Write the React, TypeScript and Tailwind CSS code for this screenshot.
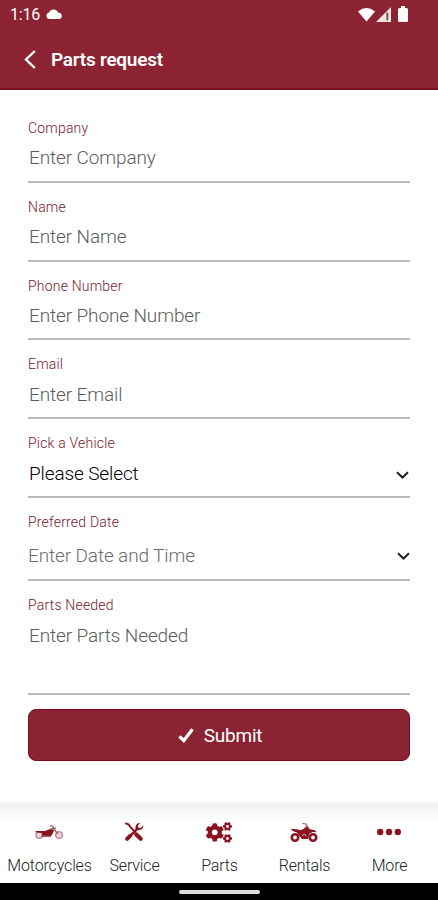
import type { ReactNode } from 'react';
import { FaCogs } from 'react-icons/fa';

type Field = {
  label: string;
  text: string;
  labelClass: string;
  rowClass: string;
  textClass: string;
  chevron?: string;
};

const fields: Field[] = [
  { label: 'Company', text: 'Enter Company', labelClass: 'h-[17px] pt-px', rowClass: 'h-[47px] pt-[10px] mb-4', textClass: 'pl-px text-[#5c5c5c]' },
  { label: 'Name', text: 'Enter Name', labelClass: 'h-4', rowClass: 'h-[47px] pt-[10px] mb-4', textClass: 'pl-px text-[#5c5c5c]' },
  { label: 'Phone Number', text: 'Enter Phone Number', labelClass: 'h-4', rowClass: 'h-[46px] pt-[10px] mb-4', textClass: 'pl-px text-[#5c5c5c]' },
  { label: 'Email', text: 'Enter Email', labelClass: 'h-[17px]', rowClass: 'h-[46px] pt-[10px] mb-4', textClass: 'pl-px text-[#5c5c5c]' },
  { label: 'Pick a Vehicle', text: 'Please Select', labelClass: 'h-4', rowClass: 'h-[47px] pt-[11px] mb-4', textClass: 'pl-px text-black', chevron: 'mr-px mt-[9px]' },
  { label: 'Preferred Date', text: 'Enter Date and Time', labelClass: 'h-4', rowClass: 'h-[51px] pt-[14px] mb-4', textClass: 'text-[#6c6c6c]', chevron: 'mt-[8px]' },
  { label: 'Parts Needed', text: 'Enter Parts Needed', labelClass: 'h-4', rowClass: 'h-[82px] pt-[11px] mb-[14px]', textClass: 'pl-px text-[#5c5c5c]' },
];

function Chevron({ className }: { className: string }) {
  return (
    <svg className={`h-[8px] w-[13px] ${className}`} viewBox="0 0 13 8" fill="none" stroke="#222" strokeWidth="2">
      <path d="M1 1.2 6.5 6.5 12 1.2" />
    </svg>
  );
}

function MotorcycleIcon() {
  return (
    <svg className="h-[18px] w-[30px]" viewBox="0 0 30 18" fill="none">
      <circle cx="5.3" cy="12" r="3.2" fill="#eadadd" stroke="#c58f96" strokeWidth="1.6" />
      <circle cx="25" cy="12" r="3.3" fill="#eadadd" stroke="#c58f96" strokeWidth="1.6" />
      <path d="M1.5 8h9l3-1 3.5-1 3 .8-.7 2.7-2.3 3.7H8L8 10.2 1.5 9.2z" fill="#8b1220" />
      <path d="M16 3h2.5l2 3.5 3.5 4.5M15 6.5l7-1.5" stroke="#8b4650" strokeWidth="1.2" />
      <path d="M7 13.3h10" stroke="#a65a63" strokeWidth="1.5" />
    </svg>
  );
}

function ServiceIcon() {
  return (
    <svg className="h-[20px] w-[20px]" viewBox="0 0 20 20" fill="none">
      <path d="m1.2 1.1 3.6 1.5 1.4 2.2 5.4 5.5" stroke="#8b1220" strokeWidth="1.9" />
      <path d="m12.3 12.4 4.4 4.3" stroke="#8b1220" strokeWidth="4.2" strokeLinecap="round" />
      <path d="m4.5 15.6 8.7-8.8" stroke="#8b1220" strokeWidth="2.6" />
      <path d="m3.1 16.9 3-3" stroke="#8b1220" strokeWidth="4" strokeLinecap="round" />
      <path d="M16.2 1a4.2 4.2 0 0 0-4.6 5.3 4.2 4.2 0 0 0 7.6-2.8l-2.6 2.6-2.2-.4-.5-2.1z" fill="#8b1220" />
    </svg>
  );
}

function QuadIcon() {
  return (
    <svg className="h-[21px] w-[28px]" viewBox="0 0 28 21" fill="none">
      <circle cx="5" cy="15.5" r="3.2" stroke="#8b1220" strokeWidth="2.6" />
      <circle cx="23" cy="15.5" r="3.2" stroke="#8b1220" strokeWidth="2.6" />
      <path d="M.8 6.8 7 7.2l3.7 1 3.5-1.7 2.2-2.2 3.7 3 4.7 1 1.7 2-3.8-.3-3.1 1.5-1.7 5.5h-6L9 13.5 7 10.4 2.7 9z" fill="#8b1220" />
      <path d="M12.5 1.5 16 2l2.8 4.5" stroke="#9d5860" strokeWidth="1.2" />
      <path d="m12.2 14 2-2 2.2 2" stroke="#fff" strokeWidth=".8" />
    </svg>
  );
}

function MoreIcon() {
  return (
    <svg className="h-[8px] w-[26px]" viewBox="0 0 26 8" fill="#8b1220">
      <circle cx="4.2" cy="4" r="3.2" />
      <circle cx="13" cy="4" r="3.2" />
      <circle cx="21.8" cy="4" r="3.2" />
    </svg>
  );
}

const tabs: { label: string; icon: ReactNode }[] = [
  { label: 'Motorcycles', icon: <MotorcycleIcon /> },
  { label: 'Service', icon: <ServiceIcon /> },
  { label: 'Parts', icon: <FaCogs className="h-[25px] w-[26px] text-[#8b1220]" /> },
  { label: 'Rentals', icon: <QuadIcon /> },
  { label: 'More', icon: <MoreIcon /> },
];

export default function App() {
  return (
    <div className="flex h-[900px] w-[438px] flex-col overflow-hidden bg-white font-['Roboto',sans-serif]">
      <header className="h-[90px] shrink-0 border-b-2 border-[#7f0d22] bg-[#8b2332] text-white">
        {/* Status bar */}
        <div className="flex h-[28px] items-center pl-[10px] pr-[29px]">
          <span className="pt-px text-[16px] leading-5 tracking-[-0.2px]">1:16</span>
          <svg className="ml-[6px] h-[10px] w-[16px]" viewBox="0 0 16 10" fill="currentColor">
            <path d="M3.5 10A3.3 3.3 0 0 1 3 3.5 5 5 0 0 1 12.3 3.8 3.1 3.1 0 0 1 13 10z" />
          </svg>
          <div className="ml-auto flex items-center">
            <svg className="h-[15px] w-[17px]" viewBox="0 0 18 15" fill="currentColor">
              <path d="M0 4.2Q9-3.2 18 4.2L9 15z" />
            </svg>
            <svg className="ml-px h-[15px] w-[15px]" viewBox="0 0 15 15">
              <path d="M15 0v15H0z" fill="#f3e4e6" />
              <path d="M10.3 5.5h2v7.8h-2z" fill="#8b4a56" />
            </svg>
            <svg className="ml-[7px] mr-px h-[16px] w-[10px]" viewBox="0 0 10 16" fill="currentColor">
              <path d="M3 0h4v2h1.5Q10 2 10 3.5v11q0 1.5-1.5 1.5h-7Q0 16 0 14.5v-11Q0 2 1.5 2H3z" />
            </svg>
          </div>
        </div>
        <div className="flex h-[62px] items-center pl-6">
          <svg className="h-[19px] w-[12px]" viewBox="0 0 12 19" fill="none" stroke="currentColor" strokeWidth="2.4">
            <path d="M10.8 1 2 9.5 10.8 18" />
          </svg>
          <h1 className="ml-[15px] pt-px text-[19px] font-semibold leading-6 tracking-[-0.25px]">Parts request</h1>
        </div>
      </header>

      <main className="flex-1 px-7 pt-[29px]">
        {fields.map((field) => (
          <div key={field.label}>
            <div className={`text-[14px] font-light leading-4 tracking-[0.2px] text-[#7d1529] ${field.labelClass}`}>{field.label}</div>
            <div className={`flex items-start justify-between border-b-2 border-[#bababa] ${field.rowClass}`}>
              <span className={`text-[19px] font-light leading-6 tracking-[-0.12px] ${field.textClass}`}>{field.text}</span>
              {field.chevron && <Chevron className={field.chevron} />}
            </div>
          </div>
        ))}

        <button className="flex h-[52px] w-full items-center justify-center rounded-[8px] border border-[#80091b] bg-[#8b2332] pl-[2px] text-white">
          <svg className="h-[15px] w-[16px]" viewBox="0 0 16 15" fill="none" stroke="currentColor" strokeWidth="3.2">
            <path d="m1.4 8.3 4.4 4.2L14.5 1.3" />
          </svg>
          <span className="ml-[10px] pt-px text-[19px] leading-6 tracking-[-0.2px]">Submit</span>
        </button>
      </main>

      {/* Bottom tabs */}
      <nav className="flex h-[80px] shrink-0 bg-[linear-gradient(#f3eeee,#fff_18px)]">
        {tabs.map((tab) => (
          <div key={tab.label} className="flex w-[85px] shrink-0 flex-col items-center first:ml-[7px]">
            <div className="mt-[15px] flex h-[28px] items-center pr-px">{tab.icon}</div>
            <span className="mt-[10px] text-[16px] font-light leading-5 tracking-[-0.15px] text-[#222]">{tab.label}</span>
          </div>
        ))}
      </nav>
      <div className="flex h-[17px] shrink-0 justify-center bg-black pt-[7px]">
        <div className="h-[4px] w-[81px] rounded-full bg-[#ddd]"></div>
      </div>
    </div>
  );
}
